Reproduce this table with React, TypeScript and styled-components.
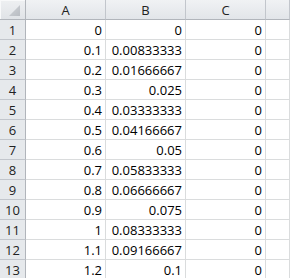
import React from "react";
import styled, { createGlobalStyle } from "styled-components";

const GlobalStyle = createGlobalStyle`
  html, body {
    margin: 0;
    padding: 0;
    background: #ffffff;
  }
`;

const Sheet = styled.div`
  display: grid;
  grid-template-columns: 26px 80px 80px 80px 1fr;
  grid-auto-rows: 20px;
  width: 290px;
  height: 278px;
  overflow: hidden;
  font-family: "Open Sans", "Liberation Sans", sans-serif;
  font-size: 13px;
  color: #000;
`;

const Corner = styled.div`
  position: relative;
  box-sizing: border-box;
  background: linear-gradient(#eef0f2, #e0e3e7);
  border-right: 1px solid #b1b5bb;
  border-bottom: 1px solid #b1b5bb;
  box-shadow: inset 1px 1px 0 #f8f9fa;
`;

const CornerMark = styled.svg`
  position: absolute;
  right: 5px;
  bottom: 3px;
`;

const ColHead = styled.div`
  box-sizing: border-box;
  display: flex;
  align-items: center;
  justify-content: center;
  background: linear-gradient(#f0f2f4, #e2e5e9);
  border-right: 1px solid #c2c6cc;
  border-bottom: 1px solid #b1b5bb;
  color: #222;
`;

const RowHead = styled.div`
  box-sizing: border-box;
  display: flex;
  align-items: center;
  justify-content: center;
  background: #e6e9ec;
  border-right: 1px solid #b1b5bb;
  border-bottom: 1px solid #c2c6cc;
  color: #222;
`;

const Cell = styled.div<{ $empty?: boolean }>`
  box-sizing: border-box;
  display: flex;
  align-items: center;
  justify-content: flex-end;
  padding-right: 3px;
  border-right: 1px solid #dadcdd;
  border-bottom: 1px solid #dadcdd;
  white-space: nowrap;
`;

const rows: [string, string, string][] = [
  ["0", "0", "0"],
  ["0.1", "0.00833333", "0"],
  ["0.2", "0.01666667", "0"],
  ["0.3", "0.025", "0"],
  ["0.4", "0.03333333", "0"],
  ["0.5", "0.04166667", "0"],
  ["0.6", "0.05", "0"],
  ["0.7", "0.05833333", "0"],
  ["0.8", "0.06666667", "0"],
  ["0.9", "0.075", "0"],
  ["1", "0.08333333", "0"],
  ["1.1", "0.09166667", "0"],
  ["1.2", "0.1", "0"],
];

export default function App() {
  return (
    <>
      <GlobalStyle />
      <Sheet>
        <Corner>
          <CornerMark width="11" height="11" viewBox="0 0 11 11">
            <defs>
              <linearGradient id="cm" x1="0" y1="0" x2="1" y2="1">
                <stop offset="0" stopColor="#d2d5d9" />
                <stop offset="1" stopColor="#b8bcc2" />
              </linearGradient>
            </defs>
            <polygon points="11,0 11,11 0,11" fill="url(#cm)" />
          </CornerMark>
        </Corner>
        <ColHead>A</ColHead>
        <ColHead>B</ColHead>
        <ColHead>C</ColHead>
        <ColHead />
        {rows.map((r, i) => (
          <React.Fragment key={i}>
            <RowHead>{i + 1}</RowHead>
            <Cell>{r[0]}</Cell>
            <Cell>{r[1]}</Cell>
            <Cell>{r[2]}</Cell>
            <Cell $empty />
          </React.Fragment>
        ))}
      </Sheet>
    </>
  );
}
